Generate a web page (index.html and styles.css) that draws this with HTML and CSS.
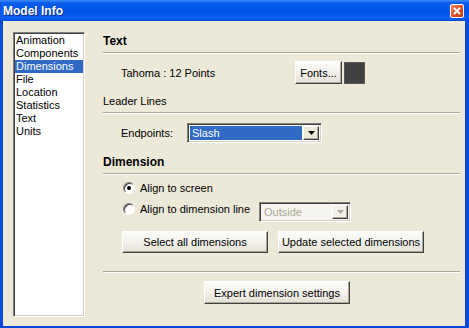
FILE: index.html
```html
<!DOCTYPE html>
<html lang="en">
<head>
    <meta charset="UTF-8">
    <title>Model Info</title>
    <link rel="stylesheet" href="styles.css">
</head>
<body>
<div class="window">
    <div class="titlebar">
        <span class="title">Model Info</span>
        <span class="close">
            <svg width="8" height="8" viewBox="0 0 8 8"><path d="M1 1L7 7M7 1L1 7" stroke="#fff" stroke-width="1.8"/></svg>
        </span>
    </div>
    <div class="client">
        <ul class="list">
            <li>Animation</li>
            <li>Components</li>
            <li class="selected">Dimensions</li>
            <li>File</li>
            <li>Location</li>
            <li>Statistics</li>
            <li>Text</li>
            <li>Units</li>
        </ul>
        <div class="panel">
            <div class="group-head bold">Text</div>
            <div class="font-row">
                <span class="font-name">Tahoma : 12 Points</span>
                <button class="btn fonts-btn">Fonts...</button>
                <span class="swatch"></span>
            </div>

            <div class="group-head leader">Leader Lines</div>
            <div class="endpoint-row">
                <span class="endpoint-label">Endpoints:</span>
                <div class="combo">
                    <span class="combo-value selected-value">Slash</span>
                    <span class="combo-arrow"><svg width="7" height="4" viewBox="0 0 7 4"><path d="M0 0H7L3.5 4Z" fill="#000"/></svg></span>
                </div>
            </div>

            <div class="group-head bold dim">Dimension</div>
            <div class="radio-row">
                <span class="radio checked"></span>
                <span>Align to screen</span>
            </div>
            <div class="radio-row second">
                <div class="radio-part">
                    <span class="radio"></span>
                    <span>Align to dimension line</span>
                </div>
                <div class="combo disabled">
                    <span class="combo-value">Outside</span>
                    <span class="combo-arrow"><svg width="7" height="4" viewBox="0 0 7 4"><path d="M0 0H7L3.5 4Z" fill="#ACA899"/></svg></span>
                </div>
            </div>
            <div class="btn-row">
                <button class="btn wide">Select all dimensions</button>
                <button class="btn wide">Update selected dimensions</button>
            </div>
            <div class="sep"></div>
            <div class="expert-row">
                <button class="btn wide expert">Expert dimension settings</button>
            </div>
        </div>
    </div>
</div>
</body>
</html>
```

FILE: styles.css
```css
* { box-sizing: border-box; }
body { margin: 0; font-family: "Liberation Sans", Arial, sans-serif; font-size: 11px; color: #000; }

.window {
    width: 469px;
    height: 328px;
    background: #0A48D8;
    padding: 0 4px 2px 3px;
    display: flex;
    flex-direction: column;
}
.titlebar {
    height: 21px;
    margin: 0 -4px 0 -3px;
    padding: 0 5px 0 3px;
    display: flex;
    align-items: center;
    justify-content: space-between;
    background: linear-gradient(to bottom, #3C8CF8 0, #0A5DEA 3px, #0055E8 50%, #0A5FF0 85%, #0048D8 100%);
}
.title {
    color: #fff;
    font-weight: bold;
    font-size: 12px;
    text-shadow: 1px 1px #0A2A9A;
}
.close {
    width: 14px;
    height: 14px;
    border: 1px solid #fff;
    border-radius: 2px;
    background: linear-gradient(135deg, #F08A60, #DC4A20 60%, #C8401A);
    display: flex;
    align-items: center;
    justify-content: center;
}

.client {
    flex: 1;
    background: #ECE9D8;
    display: flex;
}

.list {
    list-style: none;
    margin: 11px 0 0 10px;
    padding: 0;
    width: 72px;
    height: 285px;
    background: #fff;
    border: 1px solid;
    border-color: #808080 #fff #fff #808080;
    box-shadow: inset 1px 1px #404040, inset -1px -1px #D4D0C8;
    padding: 1px;
}
.list li {
    line-height: 13px;
    height: 13px;
    padding-left: 1px;
    white-space: nowrap;
}
.list li.selected { background: #316AC5; color: #fff; }

.panel {
    width: 357px;
    margin-left: 18px;
    padding-top: 13px;
}

.group-head {
    line-height: 14px;
    padding-bottom: 4px;
    border-bottom: 1px solid #ACA899;
    box-shadow: 0 1px #fff;
}
.bold { font-weight: bold; font-size: 12px; }
.leader { margin-top: 10px; }
.dim { margin-top: 12px; }

.font-row {
    margin-top: 8px;
    padding-left: 18px;
    height: 23px;
    display: flex;
    align-items: center;
}
.font-name { width: 174px; }
.swatch {
    width: 21px;
    height: 22px;
    margin-left: 2px;
    background: #404040;
    border: 1px solid #5A5A5A;
}

.btn {
    font: inherit;
    color: #000;
    height: 23px;
    padding: 0;
    background: linear-gradient(#FDFDFB, #F2F1EB 50%, #E3E0D4);
    border: 1px solid;
    border-color: #fff #404040 #404040 #fff;
    box-shadow: inset -1px -1px #ACA899;
}
.fonts-btn { width: 47px; }
.wide { width: 146px; height: 22px; }

.endpoint-row {
    margin-top: 10px;
    padding-left: 18px;
    display: flex;
    align-items: center;
}
.endpoint-label { width: 66px; }

.combo {
    width: 135px;
    height: 20px;
    background: #fff;
    border: 1px solid;
    border-color: #808080 #fff #fff #808080;
    box-shadow: inset 1px 1px #404040, inset -1px -1px #D4D0C8;
    padding: 2px;
    display: flex;
}
.combo-value {
    flex: 1;
    line-height: 14px;
    padding-left: 2px;
}
.selected-value { background: #316AC5; color: #fff; margin-right: 1px; }
.combo-arrow {
    width: 16px;
    background: #ECE9D8;
    border: 1px solid;
    border-color: #fff #404040 #404040 #fff;
    box-shadow: inset -1px -1px #ACA899;
    display: flex;
    align-items: center;
    justify-content: center;
}
.combo.disabled { width: 92px; background: #F5F4EE; margin-top: 2px; }
.combo.disabled .combo-value { color: #ACA899; }
.combo.disabled .combo-arrow { background: #F0EFE8; }

.radio-row {
    margin-top: 6px;
    padding-left: 20px;
    height: 16px;
    display: flex;
    align-items: center;
    gap: 5px;
}
.radio-row.second {
    margin-top: 4px;
    height: 22px;
    align-items: flex-start;
    gap: 0;
}
.radio-part {
    width: 136px;
    height: 16px;
    margin-top: 1px;
    display: flex;
    align-items: center;
    gap: 5px;
}
.radio {
    width: 12px;
    height: 12px;
    border-radius: 50%;
    background: #fff;
    border: 1px solid;
    border-color: #808080 #fff #fff #808080;
    box-shadow: inset 1px 1px #404040;
    display: flex;
    align-items: center;
    justify-content: center;
}
.radio.checked::after {
    content: "";
    width: 4px;
    height: 4px;
    border-radius: 50%;
    background: #000;
}

.btn-row {
    margin-top: 9px;
    padding-left: 19px;
    display: flex;
    gap: 10px;
}

.sep {
    margin-top: 18px;
    border-top: 1px solid #ACA899;
    box-shadow: 0 1px #fff;
}
.expert-row {
    margin-top: 9px;
    padding-left: 101px;
}
.expert { height: 23px; }
```
